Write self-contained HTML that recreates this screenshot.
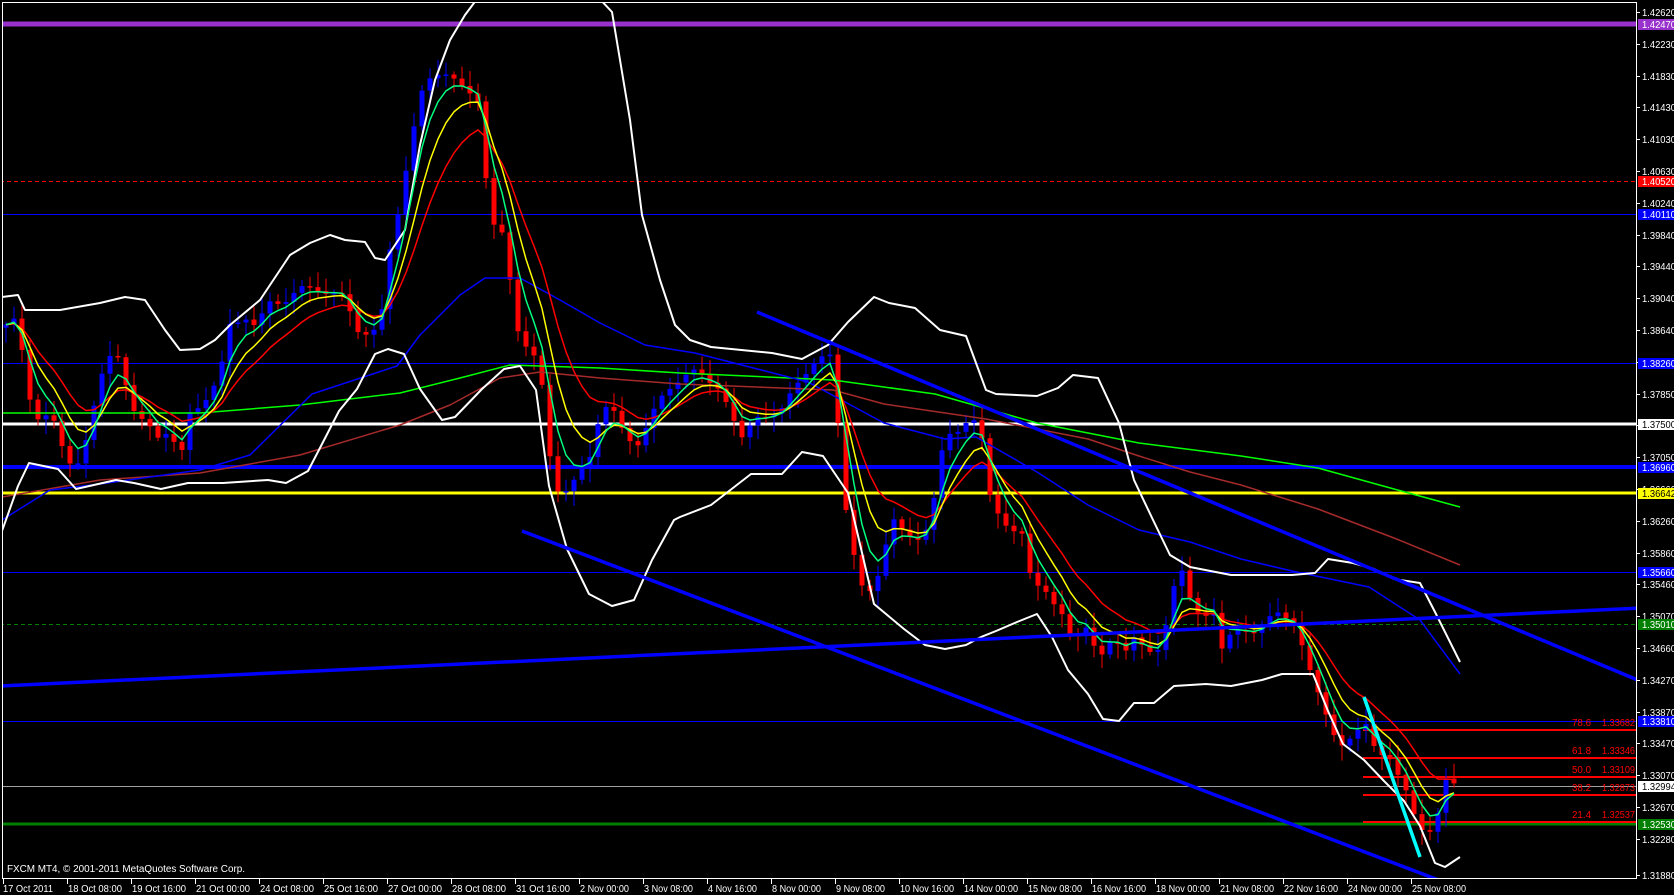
<!DOCTYPE html>
<html><head><meta charset="utf-8"><style>
html,body{margin:0;padding:0;background:#000;width:1674px;height:895px;overflow:hidden}
svg{display:block}
text{font-family:"Liberation Sans",sans-serif;font-size:10px}
</style></head><body>
<svg id="s" width="1674" height="895" viewBox="0 0 1674 895" xmlns="http://www.w3.org/2000/svg">
<rect width="1674" height="895" fill="#000"/>
<defs><clipPath id="c"><rect x="3" y="3" width="1633" height="875"/></clipPath></defs>
<g id="plot" clip-path="url(#c)">
<line x1="0" y1="24" x2="1636" y2="24" stroke="#9932cc" stroke-width="5"/>
<line x1="0" y1="181.5" x2="1636" y2="181.5" stroke="#ff0000" stroke-width="1" stroke-dasharray="4,3"/>
<line x1="0" y1="214.5" x2="1636" y2="214.5" stroke="#0000ff" stroke-width="1"/>
<line x1="0" y1="363.5" x2="1636" y2="363.5" stroke="#0000ff" stroke-width="1"/>
<line x1="0" y1="467" x2="1636" y2="467" stroke="#0000ff" stroke-width="4"/>
<line x1="0" y1="493" x2="1636" y2="493" stroke="#ffff00" stroke-width="3"/>
<line x1="0" y1="572.5" x2="1636" y2="572.5" stroke="#0000ff" stroke-width="1"/>
<line x1="0" y1="624.5" x2="1636" y2="624.5" stroke="#008000" stroke-width="1" stroke-dasharray="4,3"/>
<line x1="0" y1="721.5" x2="1636" y2="721.5" stroke="#0000ff" stroke-width="1"/>
<line x1="0" y1="786.5" x2="1636" y2="786.5" stroke="#a0a0a4" stroke-width="1"/>
<line x1="0" y1="824" x2="1636" y2="824" stroke="#008000" stroke-width="3"/>
<line x1="0" y1="424" x2="1636" y2="424" stroke="#ffffff" stroke-width="3"/>
<g stroke="#ff0000" stroke-width="2">
<line x1="1363" y1="730" x2="1636" y2="730"/>
<line x1="1363" y1="758" x2="1636" y2="758"/>
<line x1="1363" y1="777" x2="1636" y2="777"/>
<line x1="1363" y1="795" x2="1636" y2="795"/>
<line x1="1363" y1="822" x2="1636" y2="822"/>
</g>
<g fill="#ff0000">
<text x="1572" y="726" textLength="19" lengthAdjust="spacingAndGlyphs">78.6</text><text x="1602" y="726" textLength="33" lengthAdjust="spacingAndGlyphs">1.33682</text>
<text x="1572" y="754" textLength="19" lengthAdjust="spacingAndGlyphs">61.8</text><text x="1602" y="754" textLength="33" lengthAdjust="spacingAndGlyphs">1.33346</text>
<text x="1572" y="773" textLength="19" lengthAdjust="spacingAndGlyphs">50.0</text><text x="1602" y="773" textLength="33" lengthAdjust="spacingAndGlyphs">1.33109</text>
<text x="1572" y="791" textLength="19" lengthAdjust="spacingAndGlyphs">38.2</text><text x="1602" y="791" textLength="33" lengthAdjust="spacingAndGlyphs">1.32873</text>
<text x="1572" y="818" textLength="19" lengthAdjust="spacingAndGlyphs">21.4</text><text x="1602" y="818" textLength="33" lengthAdjust="spacingAndGlyphs">1.32537</text>
</g>
<g id="dyn"></g>
<g stroke="#0000ff" stroke-width="3.5">
<line x1="522" y1="531" x2="1470" y2="892"/>
<line x1="757" y1="312" x2="1640" y2="681"/>
<line x1="0" y1="686" x2="1640" y2="608"/>
</g>
<line x1="1364" y1="697" x2="1420" y2="857" stroke="#00ffff" stroke-width="3.5"/>
</g>
<rect x="2.5" y="2.5" width="1634" height="876" fill="none" stroke="#fff" stroke-width="1"/>
<text x="7" y="872" fill="#fff" font-size="11" textLength="238" lengthAdjust="spacingAndGlyphs">FXCM MT4, © 2001-2011 MetaQuotes Software Corp.</text>
<g id="axis"></g>
</svg>
<script>
(function(){
var NS="http://www.w3.org/2000/svg";
var dyn=document.getElementById('dyn'),axis=document.getElementById('axis');
function el(p,n,a,t){var e=document.createElementNS(NS,n);for(var k in a)e.setAttribute(k,a[k]);if(t!=null)e.textContent=t;p.appendChild(e);return e;}
function interp(P,x){if(x<=P[0][0])return P[0][1];for(var i=1;i<P.length;i++){if(x<=P[i][0]){var a=P[i-1],b=P[i];return a[1]+(b[1]-a[1])*(x-a[0])/(b[0]-a[0]);}}return P[P.length-1][1];}
function poly(P,col,w){el(dyn,'polyline',{points:P.map(function(p){return p[0]+','+p[1]}).join(' '),fill:'none',stroke:col,'stroke-width':w||1.5,'stroke-linejoin':'round'});}
var up1=[[2,297],[18,295],[25,310],[60,310],[100,303],[125,297],[145,300],[165,330],[180,350],[200,349],[215,340],[230,325],[260,300],[290,255],[310,243],[330,235],[345,240],[365,242],[375,258],[385,260],[395,245],[405,230],[420,145],[435,80],[450,40],[465,15],[480,-5]];
var up2=[[596,-5],[612,12],[630,120],[642,215],[660,280],[675,325],[690,340],[711,347],[772,353],[802,359],[828,345],[848,322],[874,297],[889,303],[915,308],[940,330],[966,336],[986,390],[996,394],[1037,396],[1058,388],[1073,375],[1098,378],[1119,423],[1134,480],[1154,522],[1170,555],[1190,567],[1231,575],[1292,575],[1315,573],[1328,559],[1353,563],[1374,569],[1394,579],[1420,583],[1435,612],[1460,662]];
var lo=[[2,531],[18,486],[29,463],[58,469],[76,489],[116,480],[134,483],[161,489],[188,483],[223,483],[268,480],[286,483],[308,471],[321,446],[339,411],[357,389],[375,354],[388,349],[404,354],[420,389],[442,420],[455,417],[482,389],[504,369],[520,366],[536,390],[549,486],[567,549],[589,594],[612,606],[634,600],[652,560],[674,520],[680,517],[711,505],[751,474],[782,474],[802,452],[823,456],[848,493],[874,604],[904,629],[925,645],[945,649],[966,645],[981,637],[996,631],[1017,622],[1037,614],[1052,637],[1068,670],[1088,694],[1103,719],[1119,721],[1134,703],[1154,703],[1174,686],[1206,684],[1231,686],[1262,680],[1282,674],[1313,674],[1328,711],[1343,744],[1364,760],[1384,781],[1404,801],[1420,826],[1435,863],[1445,867],[1460,857]];
var blue=[[2,520],[50,490],[100,484],[200,470],[250,455],[312,394],[397,366],[420,335],[460,295],[485,278],[520,278],[560,300],[600,323],[645,345],[695,353],[808,382],[884,423],[945,439],[976,437],[1037,472],[1088,505],[1139,530],[1190,542],[1241,559],[1292,571],[1369,587],[1420,620],[1460,674]];
var brown=[[2,497],[100,480],[200,473],[300,455],[400,425],[450,405],[500,378],[540,372],[600,378],[680,384],[833,390],[884,404],[986,419],[1088,439],[1139,456],[1190,472],[1241,485],[1318,509],[1394,538],[1460,565]];
var green=[[2,413],[200,413],[300,405],[400,393],[460,378],[510,365],[600,368],[680,373],[833,380],[935,394],[1037,423],[1139,443],[1241,456],[1318,468],[1394,489],[1460,507]];
var P=[[2,330],[18,320],[27,390],[40,420],[50,410],[65,460],[75,470],[85,440],[100,380],[115,350],[125,380],[135,410],[145,420],[160,445],[170,430],[180,455],[190,410],[200,410],[210,400],[220,370],[230,320],[245,320],[255,330],[270,300],[285,300],[300,290],[320,290],[340,290],[360,340],[370,330],[380,320],[390,250],[400,210],[410,150],[420,90],[430,75],[440,75],[450,80],[460,85],[470,90],[480,100],[490,230],[500,225],[510,280],[520,340],[530,345],[540,370],[550,460],[560,500],[570,480],[580,470],[590,460],[600,420],[610,400],[620,420],[630,440],[640,450],[650,420],[660,395],[670,385],[680,380],[695,373],[721,386],[741,443],[757,415],[782,410],[808,369],[818,353],[833,357],[843,497],[859,579],[874,592],[884,555],[894,522],[904,530],[920,538],[930,526],[945,435],[955,431],[971,415],[981,435],[991,505],[1006,522],[1022,534],[1032,587],[1047,592],[1063,612],[1073,645],[1088,629],[1098,657],[1114,633],[1124,657],[1134,641],[1149,649],[1162,645],[1170,604],[1180,567],[1188,596],[1200,612],[1216,612],[1221,653],[1231,637],[1241,629],[1257,629],[1267,620],[1277,616],[1287,620],[1297,624],[1308,662],[1323,711],[1333,736],[1343,744],[1348,736],[1356,731],[1364,719],[1371,744],[1379,760],[1387,752],[1394,764],[1404,781],[1412,810],[1420,834],[1427,834],[1435,834],[1443,773],[1450,777],[1458,785]];
var xs=[],cl=[];
for(var x=6;x<=1458;x+=8){xs.push(x);cl.push(interp(P,x)+Math.sin(x*1.7)*4);}
for(var i=0;i<xs.length;i++){
 var o=i?cl[i-1]:cl[i]+3,c=cl[i];
 var top=Math.min(o,c),bot=Math.max(o,c);
 if(bot-top<1.5){bot=top+1.5;}
 var h=top-(3+Math.abs(Math.sin(i*2.3))*12),l=bot+(3+Math.abs(Math.cos(i*1.9))*12);
 var col=c<o?'#0000ff':'#ff0000';
 el(dyn,'line',{x1:xs[i],y1:h,x2:xs[i],y2:l,stroke:col,'stroke-width':1});
 el(dyn,'rect',{x:xs[i]-2.5,y:top,width:5,height:bot-top,fill:col});
}
function ema(n){var k=2/(n+1),v=cl[0],out=[];for(var i=0;i<cl.length;i++){v=cl[i]*k+v*(1-k);out.push([xs[i],v]);}return out;}
poly(green,'#00ff00',1.5);
poly(brown,'#a52a2a',1.5);
poly(blue,'#0000ff',1.5);
poly(up1,'#ffffff',2);poly(up2,'#ffffff',2);poly(lo,'#ffffff',2);
poly(ema(12),'#ff0000',1.5);
poly(ema(7),'#ffff00',1.5);
poly(ema(4),'#00ff7f',1.5);
var labs=["1.42620","1.42230","1.41830","1.41430","1.41030","1.40630","1.40240","1.39840","1.39440","1.39040","1.38640","1.38250","1.37850","1.37450","1.37050","1.36660","1.36260","1.35860","1.35460","1.35070","1.34660","1.34270","1.33870","1.33470","1.33070","1.32670","1.32280","1.31880"];
for(var j=0;j<labs.length;j++){var y=Math.round(12+j*31.8);if(j==labs.length-1)y=875;
 el(axis,'line',{x1:1636,y1:y+.5,x2:1640,y2:y+.5,stroke:'#fff'});
 el(axis,'text',{x:1642,y:y+4,fill:'#fff',textLength:34,lengthAdjust:'spacingAndGlyphs'},labs[j]);}
var hl=[[24,"1.42470","#9932cc","#fff"],[181,"1.40520","#ff0000","#fff"],[214,"1.40110","#0000ff","#fff"],[363,"1.38260","#0000ff","#fff"],[424,"1.37500","#ffffff","#000"],[467,"1.36960","#0000ff","#fff"],[493,"1.36642","#ffff00","#000"],[572,"1.35660","#0000ff","#fff"],[624,"1.35010","#008000","#fff"],[721,"1.33810","#0000ff","#fff"],[786,"1.32994","#ffffff","#000"],[824,"1.32530","#008000","#fff"]];
hl.forEach(function(h){el(axis,'rect',{x:1638,y:h[0]-5,width:36,height:11,fill:h[2]});el(axis,'text',{x:1642,y:h[0]+4,fill:h[3],textLength:34,lengthAdjust:'spacingAndGlyphs'},h[1]);});
var tl=["17 Oct 2011","18 Oct 08:00","19 Oct 16:00","21 Oct 00:00","24 Oct 08:00","25 Oct 16:00","27 Oct 00:00","28 Oct 08:00","31 Oct 16:00","2 Nov 00:00","3 Nov 08:00","4 Nov 16:00","8 Nov 00:00","9 Nov 08:00","10 Nov 16:00","14 Nov 00:00","15 Nov 08:00","16 Nov 16:00","18 Nov 00:00","21 Nov 08:00","22 Nov 16:00","24 Nov 00:00","25 Nov 08:00"];
for(var t=0;t<tl.length;t++){var x=3+t*64;
 el(axis,'line',{x1:x+.5,y1:878,x2:x+.5,y2:884,stroke:'#fff'});
 var w=tl[t].length>=12?54:(tl[t].length==11?49:47);
 if(t==0)w=50;
 el(axis,'text',{x:x+(t?1:0),y:892,fill:'#fff','font-size':11,textLength:w,lengthAdjust:'spacingAndGlyphs'},tl[t]);}
})();
</script>
</body></html>
